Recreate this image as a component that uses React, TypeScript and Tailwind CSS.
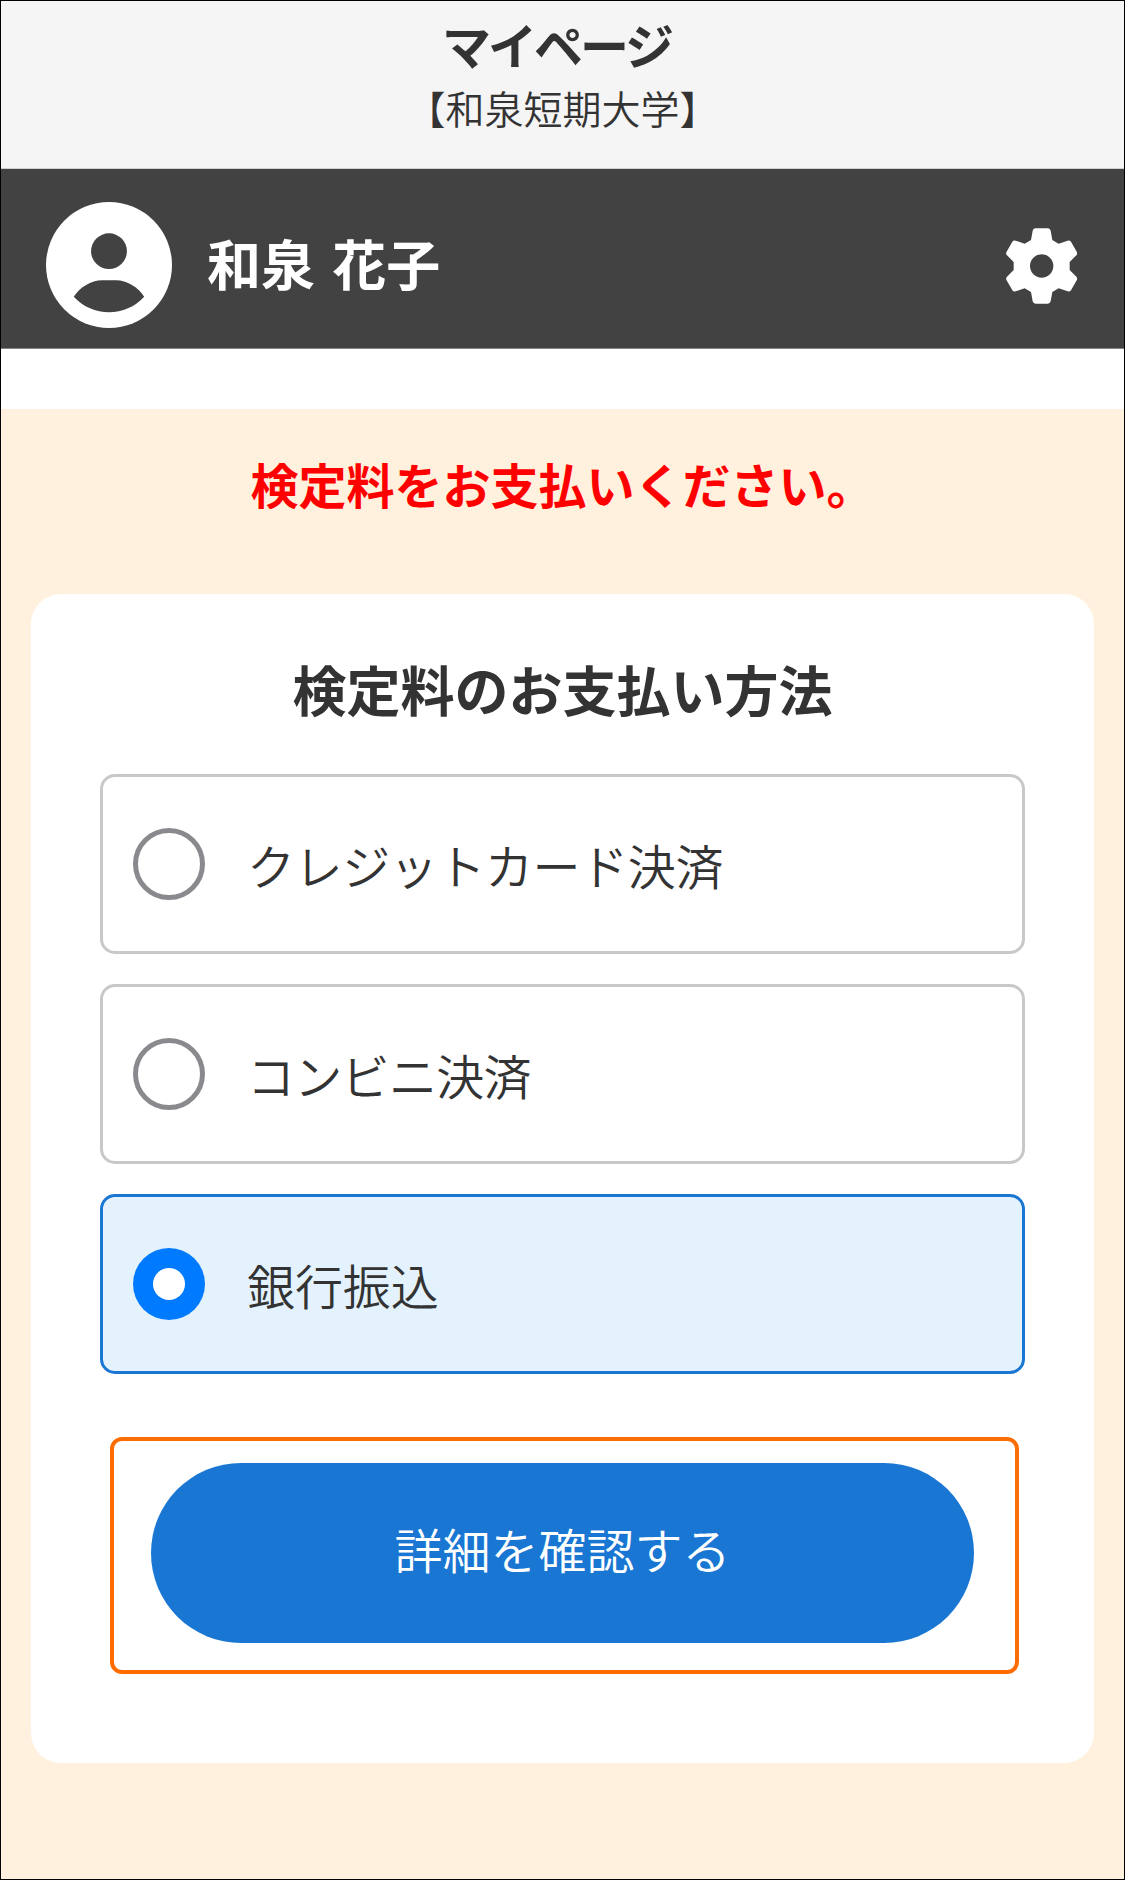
type PaymentMethod = {
  id: string;
  label: string;
  labelClass: string;
};

const paymentMethods: PaymentMethod[] = [
  { id: "credit", label: "クレジットカード決済", labelClass: "tracking-[-0.4px]" },
  { id: "convenience", label: "コンビニ決済", labelClass: "tracking-[-0.7px]" },
  { id: "bank", label: "銀行振込", labelClass: "tracking-[-0.1px]" },
];

function AccountIcon() {
  return (
    <svg viewBox="0 0 126 126" className="h-[126px] w-[126px] shrink-0">
      <circle cx="63" cy="63" r="63" fill="#fff" />
      <circle cx="63" cy="49.2" r="17.9" fill="#424242" />
      <path
        d="M27.8 94.8C34 85 45 78.2 56 78.2H70C81 78.2 92 85 98.2 94.8C89 105 76 110.3 63 110.3S37 105 27.8 94.8Z"
        fill="#424242"
      />
    </svg>
  );
}

function GearIcon() {
  return (
    <svg viewBox="-107 -114 214 228" className="h-[76px] w-[71.33px] shrink-0">
      <path
        fillRule="evenodd"
        fill="#fff"
        d="M-19-113H19Q26-112 27-106L32-78L51-67L78-76Q84-78 88-73L106-41Q108-36 104-32L84-12V12L104 32Q108 36 106 41L88 73Q84 78 78 76L51 67L32 78L27 106Q26 112 19 113H-19Q-26 112-27 106L-32 78L-51 67L-78 76Q-84 78-88 73L-106 41Q-108 36-104 32L-84 12V-12L-104-32Q-108-36-106-41L-88-73Q-84-78-78-76L-51-67L-32-78L-27-106Q-26-112-19-113ZM35 0A35 35 0 1 0-35 0A35 35 0 1 0 35 0Z"
      />
    </svg>
  );
}

function PaymentOption({
  method,
  isSelected = false,
}: {
  method: PaymentMethod;
  isSelected?: boolean;
}) {
  return (
    <label
      className={`flex h-[180px] items-center rounded-[15px] border-3 pl-[30px] ${
        isSelected ? "border-[#1976d2] bg-[#e4f2fd]" : "border-[#c8c8c8] bg-white"
      }`}
    >
      <input
        type="radio"
        name="payment"
        value={method.id}
        defaultChecked={isSelected}
        className="sr-only"
      />
      <span
        className={`flex h-[72px] w-[72px] shrink-0 items-center justify-center rounded-full ${
          isSelected ? "bg-[#007aff]" : "border-5 border-[#8a8a8e]"
        }`}
      >
        {isSelected && <span className="h-8 w-8 rounded-full bg-white" />}
      </span>
      <span
        className={`pb-px pl-[42px] text-[48px] leading-[72px] font-[350] ${method.labelClass}`}
      >
        {method.label}
      </span>
    </label>
  );
}

export default function App() {
  return (
    <div className="flex h-[1880px] w-[1125px] flex-col border border-black bg-white font-['Noto_Sans_CJK_JP_DemiLight','Noto_Sans_CJK_JP',sans-serif] text-[#333333]">
      <header className="flex h-[168px] flex-col items-center border-b border-[#cfcfcf] bg-[#f5f5f5] pt-[6px]">
        <h1 className="pr-3 font-['Noto_Sans_CJK_JP',sans-serif] text-[49px] leading-[74px] font-bold tracking-[-3px]">
          マイページ
        </h1>
        <p className="pt-[3px] text-[39px] leading-[46px] font-[350] whitespace-nowrap">
          【和泉短期大学】
        </p>
      </header>

      <div className="flex h-[180px] items-center border-b border-[#848484] bg-[#424242] pt-3 pr-[47px] pl-[45px]">
        <AccountIcon />
        <p className="pb-1 pl-[35px] font-['Noto_Sans_CJK_JP',sans-serif] text-[54px] leading-[72px] font-bold text-white [word-spacing:5px]">
          和泉 花子
        </p>
        <button type="button" aria-label="設定" className="mt-[3px] ml-auto">
          <GearIcon />
        </button>
      </div>

      <main className="mt-[60px] flex-1 bg-[#fff1de] px-[30px] pt-[38px]">
        <p className="text-center font-['Noto_Sans_CJK_JP',sans-serif] text-[48px] leading-[72px] font-bold text-[#ff0000]">
          検定料をお支払いください。
        </p>

        <section className="mt-[75px] h-[1169px] rounded-[30px] bg-white px-[69px] pt-[59px]">
          <h2 className="text-center font-['Noto_Sans_CJK_JP',sans-serif] text-[54px] leading-[72px] font-bold">
            検定料のお支払い方法
          </h2>
          <div className="mt-[49px] flex flex-col gap-[30px]">
            {paymentMethods.map((method) => (
              <PaymentOption
                key={method.id}
                method={method}
                isSelected={method.id === "bank"}
              />
            ))}
          </div>
          <div className="mt-[63px] mr-[6px] ml-[10px] h-[237px] rounded-[12px] border-4 border-[#ff6d00] px-[37px] pt-[22px]">
            <button
              type="button"
              className="h-[180px] w-[823px] rounded-full bg-[#1976d2] pb-[11px] text-[48px] leading-[72px] font-[350] text-white"
            >
              詳細を確認する
            </button>
          </div>
        </section>
      </main>
    </div>
  );
}
